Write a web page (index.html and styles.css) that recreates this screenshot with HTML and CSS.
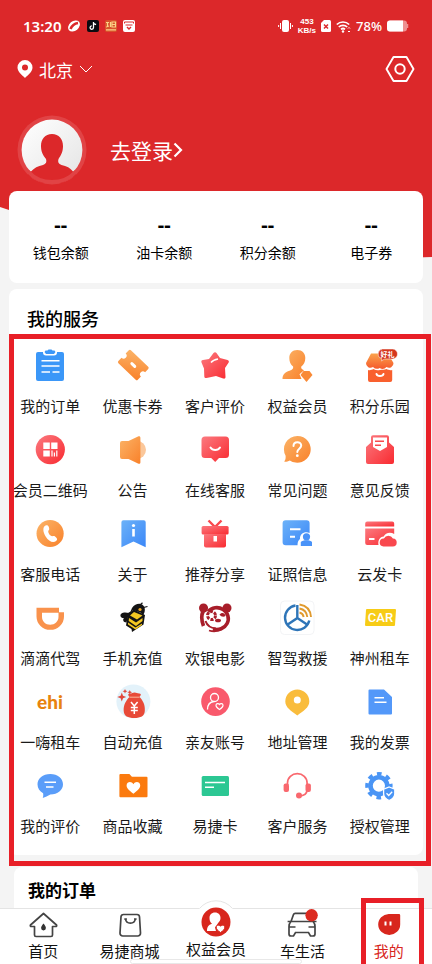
FILE: index.html
```html
<!DOCTYPE html>
<html lang="zh-CN">
<head>
  <meta charset="UTF-8">
  <meta name="viewport" content="width=device-width, initial-scale=1.0">
  <title>我的</title>
  <link rel="stylesheet" href="styles.css">
</head>
<body>
  <header class="hero">
    <div class="status-bar">
      <span class="time">13:20</span>
      <svg width="14" height="14" viewBox="0 0 14 14">
        <defs>
          <linearGradient id="red" x1="0" y1="0" x2="1" y2="1"><stop offset="0" stop-color="#fb7a80"/><stop offset="1" stop-color="#f92a30"/></linearGradient>
          <linearGradient id="orange" x1="0" y1="0" x2="1" y2="1"><stop offset="0" stop-color="#fbb468"/><stop offset="1" stop-color="#f9812a"/></linearGradient>
          <linearGradient id="blue" x1="0" y1="0" x2="1" y2="1"><stop offset="0" stop-color="#6cb2f8"/><stop offset="1" stop-color="#3b87f8"/></linearGradient>
          <linearGradient id="shop" x1="0" y1="0" x2="0" y2="1"><stop offset="0" stop-color="#fba34c"/><stop offset="1" stop-color="#f55a2c"/></linearGradient>
          <linearGradient id="face" x1="0" y1="0" x2="1" y2="1"><stop offset="0" stop-color="#ffffff"/><stop offset="1" stop-color="#e4e4e4"/></linearGradient>
        </defs>
        <ellipse cx="7" cy="7" rx="6.600" ry="4.800" transform="rotate(-40 7 7)" fill="#fff"/>
        <path d="M3.500 10C4.500 7.500 7.500 4.500 11 4" stroke="#dc282a" stroke-width="2.600" fill="none"/>
      </svg>
      <svg width="12" height="12" viewBox="0 0 12 12">
        <rect width="12" height="12" rx="2" fill="#0b0b10"/>
        <path d="M6.500 2v5.600a1.700 1.700 0 1 1-1.700-1.700M6.500 2c.2 1.600 1.200 2.400 2.600 2.500" stroke="#fff" stroke-width="1.300" fill="none"/>
      </svg>
      <svg width="12" height="12" viewBox="0 0 12 12">
        <rect width="12" height="12" rx="2" fill="#d9532c"/>
        <path d="M1 2.500h3M2.500 2v5M1 7l3-1M5.500 2v5M7 2h3.500v5H7zM7 4.500h3.500M1 9.800h10" stroke="#fbd487" stroke-width="1.200" fill="none"/>
      </svg>
      <svg width="12" height="12" viewBox="0 0 12 12">
        <rect width="12" height="12" rx="2" fill="#fff"/>
        <path d="M1.500 3.500V2h9v1.500M2.500 5h7" stroke="#dc282a" fill="none"/>
        <path d="M4 7l2 2 2-2" stroke="#dc282a" stroke-width="1.400" fill="none"/>
      </svg>
      <div class="status-right">
        <svg width="15" height="14" viewBox="0 0 15 14">
          <rect x="4" y="1" width="7" height="12" rx="2" fill="#fff"/>
          <path d="M2.500 4v6M12.500 4v6M.6 6v2M14.400 6v2" stroke="#fff"/>
        </svg>
        <span class="speed"><span>453</span><span>KB/s</span></span>
        <svg width="10" height="12" viewBox="0 0 10 12">
          <path d="M3 0h5.500A1.500 1.500 0 0 1 10 1.500v9A1.500 1.500 0 0 1 8.500 12h-7A1.500 1.500 0 0 1 0 10.500V3z" fill="#fff"/>
          <path d="M3 4.500l4 4M7 4.500l-4 4" stroke="#dc282a" stroke-width="1.500"/>
        </svg>
        <svg width="15" height="13" viewBox="0 0 15 13">
          <path d="M.8 4.500a9 9 0 0 1 12.400 0M2.800 7a6 6 0 0 1 8.400 0M5 9.400a3 3 0 0 1 4 0" stroke="#fff" stroke-width="1.700" fill="none"/>
          <circle cx="7" cy="11.500" r="1.200" fill="#fff"/>
          <path d="M12 8.500l1-1 1 1M12 11l1 1 1-1" stroke="#fff" fill="none"/>
        </svg>
        <span class="percent">78%</span>
        <svg width="22" height="12" viewBox="0 0 22 12">
          <rect width="20" height="11" y=".5" rx="3" fill="#ee8f90"/>
          <path d="M3 .5h13v11H3a3 3 0 0 1-3-3v-5a3 3 0 0 1 3-3z" fill="#fff"/>
          <path d="M20.500 4v4" stroke="#ee8f90" stroke-width="1.500"/>
        </svg>
      </div>
    </div>

    <div class="location-bar">
      <button class="city" type="button">
        <svg width="16" height="20" viewBox="0 0 16 20">
          <path fill-rule="evenodd" d="M8 1a7.500 7.500 0 0 1 7.500 7.500C15.500 13 11 16 8 19 5 16 .5 13 .5 8.500A7.500 7.500 0 0 1 8 1zm0 4.500a3 3 0 1 0 0 6 3 3 0 0 0 0-6z" fill="#fff"/>
        </svg>
        <span>北京</span>
        <svg width="14" height="8" viewBox="0 0 14 8"><path d="M1 1l6 6 6-6" stroke="#fff" fill="none"/></svg>
      </button>
      <button class="settings" type="button" aria-label="设置">
        <svg width="30" height="28" viewBox="0 0 30 28">
          <path d="M8.500 2h13L28.500 14l-7 12h-13L1.500 14z" stroke="#fff" stroke-width="1.900" fill="none" stroke-linejoin="round"/>
          <circle cx="15" cy="14" r="4.700" stroke="#fff" stroke-width="2" fill="none"/>
        </svg>
      </button>
    </div>

    <a class="profile" href="#">
      <svg width="70" height="70" viewBox="0 0 70 70">
        <circle cx="35" cy="35" r="34.500" fill="#e14345"/>
        <circle cx="35" cy="35" r="30.400" fill="url(#face)"/>
        <path d="M35 19c7 0 11 5 11 12 0 6-2 9-4.500 13-1 3 0 5 3 6 5 1 9 3 11.500 6.500L60 60 45 68H25L10 60l4-3.500C17 53 21 51 26 50c3-1 4-3 3-6-3-4-5-7-5-13 0-7 4-12 11-12z" fill="#dc282a"/>
        <path d="M11 56.500a32.500 32.500 0 0 0 48 0" stroke="#e14345" stroke-width="4" fill="none"/>
      </svg>
      <span class="login">去登录<svg width="10" height="16" viewBox="0 0 10 16"><path d="M1.500 1.500L8 8l-6.500 6.500" stroke="#fff" stroke-width="2.200" fill="none"/></svg></span>
    </a>
  </header>

  <main>
    <section class="card balances">
      <a href="#"><strong>--</strong>钱包余额</a>
      <a href="#"><strong>--</strong>油卡余额</a>
      <a href="#"><strong>--</strong>积分余额</a>
      <a href="#"><strong>--</strong>电子券</a>
    </section>

    <section class="card services">
      <h2>我的服务</h2>
      <div class="service-grid">
        <a href="#">
          <svg viewBox="0 0 36 36">
            <rect x="4" y="4" width="28" height="29" rx="2" fill="#3b97f8"/>
            <path d="M11 3.500h14v1a3 3 0 0 1-3 3h-8a3 3 0 0 1-3-3z" fill="#fff"/>
            <path d="M12.500 4l1-1.500h2l1-1h3l1 1h2l1 1.500-1.500 2h-8z" fill="#3b97f8"/>
            <path d="M9.500 12.700h18M9.500 18h18M9.500 24H18M20.500 24h7" stroke="#fff" stroke-width="1.500"/>
          </svg>
          我的订单
        </a>
        <a href="#">
          <svg viewBox="0 0 36 36">
            <g transform="translate(18.300 17) rotate(44)">
              <path d="M-12-9H12a1.500 1.500 0 0 1 1.500 1.500V-3a3 3 0 0 0 0 6v4.500A1.500 1.500 0 0 1 12 9h-24a1.500 1.500 0 0 1-1.500-1.500V3a3 3 0 0 0 0-6v-4.500A1.500 1.500 0 0 1-12-9z" fill="url(#orange)"/>
              <path d="M-2 0h4" stroke="#fff" stroke-width="3" stroke-linecap="round"/>
            </g>
          </svg>
          优惠卡券
        </a>
        <a href="#">
          <svg viewBox="0 0 36 36">
            <path d="M16.500 5c1-1.200 2.300-1 3 0l3.500 5 7.500 2c1.300.5 1.800 1.500 1 2.800L28 20l.5 9c0 1.300-1 2-2.300 1.500L19 28l-9.500 2c-1.300.3-2-.5-2.200-1.600L7 20.500 4.500 14.500c-.5-1.500 0-2.300 1.500-2.500l6-1z" fill="url(#red)"/>
            <path d="M14 14.500c1.500-2 4-3 7-3.500" stroke="#fff" stroke-width="1.500" fill="none"/>
          </svg>
          客户评价
        </a>
        <a href="#">
          <svg viewBox="0 0 36 36">
            <path d="M18.300 2c5 0 8 3.400 8 8 0 4-1.500 6.500-4 8.600-.5 2 .5 3 2.700 3.600l-4.500 4 2 4.800H3.500c0-4.500 2.500-6.800 7-8.200 3-.9 4-2 3.600-4.200-2.400-2-3.800-4.600-3.800-8.600 0-4.600 3-8 8-8z" fill="url(#orange)"/>
            <path d="M24.500 23h6l3 4-6 7-6-7z" fill="#f98a36"/>
          </svg>
          权益会员
        </a>
        <a href="#">
          <svg viewBox="0 0 36 36">
            <path d="M9 5.500h17l5.500 9.500a4.500 4.500 0 0 1-7 4 5.500 5.500 0 0 1-6.800 1 5.500 5.500 0 0 1-6.700-1 4.500 4.500 0 0 1-7-4z" fill="url(#shop)"/>
            <path d="M6 22c2 .5 4-.1 5.500-1 2 1.200 4 1.600 6.500 1s4.500.2 6.500-1c1.500.9 3.500 1.500 5.700 1v10a2 2 0 0 1-2 2H8a2 2 0 0 1-2-2z" fill="#f9602e"/>
            <path d="M14.500 26c.7 2.600 6.300 2.600 7 0" stroke="#fff" stroke-width="2" fill="none" stroke-linecap="round"/>
            <path d="M20.500 1h10a5 5 0 0 1 0 10h-8l-3 2 .5-2.200A5 5 0 0 1 20.500 1z" fill="#d5361d" stroke="#fff" stroke-width=".5"/>
            <text class="badge-text" x="25.500" y="8.500">好礼</text>
          </svg>
          积分乐园
        </a>

        <a href="#">
          <svg viewBox="0 0 36 36">
            <circle cx="18.300" cy="17.600" r="14.600" fill="url(#red)"/>
            <path d="M11.300 10.600h6.500v6.400h-6.500zM19.200 10.600h6.300v6.400h-6.300zM11.300 18.400h6.500v6.200h-6.500z" fill="#fff"/>
            <path d="M20 18.400v6.200M22.400 20.500v4.100M24.800 18.400v6.200" stroke="#fff" stroke-width="1.200"/>
          </svg>
          会员二维码
        </a>
        <a href="#">
          <svg viewBox="0 0 36 36">
            <circle cx="22" cy="17.800" r="9" fill="#fbc79a"/>
            <path d="M7 9h6.500l9.500-4.500c1.500-.6 2.400 0 2.400 1.300v24.500c0 1.300-1 1.900-2.400 1.300L13.500 27H7a2 2 0 0 1-2-2V11a2 2 0 0 1 2-2z" fill="url(#orange)"/>
          </svg>
          公告
        </a>
        <a href="#">
          <svg viewBox="0 0 36 36">
            <path d="M8 4.600h20.500a3.500 3.500 0 0 1 3.500 3.500v14.500a3.500 3.500 0 0 1-3.500 3.500H22L18.200 30l-4-3.900H8a3.500 3.500 0 0 1-3.500-3.500V8.100A3.500 3.500 0 0 1 8 4.600z" fill="url(#red)"/>
            <path d="M13.500 15.500c2 3.300 7.500 3.300 9.500 0" stroke="#fff" stroke-width="2" fill="none" stroke-linecap="round"/>
          </svg>
          在线客服
        </a>
        <a href="#">
          <svg viewBox="0 0 36 36">
            <path d="M18.300 3.900a13.400 13.400 0 1 1-7.500 24.500c-2 1.200-4 1.400-5.800 1.200 1.300-1 1.800-2.800 1.600-5.800A13.400 13.400 0 0 1 18.300 3.900z" fill="url(#orange)"/>
            <path d="M14.500 14c0-5 7.700-5 7.700-.4 0 3-3.900 3.200-3.900 6.400" stroke="#fff" stroke-width="2" fill="none" stroke-linecap="round"/>
            <circle cx="18.300" cy="23.700" r="1.400" fill="#fff"/>
          </svg>
          常见问题
        </a>
        <a href="#">
          <svg viewBox="0 0 36 36">
            <path d="M4 15l5-4.500V5.300a2 2 0 0 1 2-2h14a2 2 0 0 1 2 2v5.200l5 4.500v15a2 2 0 0 1-2 2H6a2 2 0 0 1-2-2z" fill="url(#red)"/>
            <path d="M11 5.500h14V15l-7 4-7-4z" fill="#fff"/>
            <path d="M13 9.300h9M13 13.300h6" stroke="#f9494f" stroke-width="1.500"/>
          </svg>
          意见反馈
        </a>

        <a href="#">
          <svg viewBox="0 0 36 36">
            <circle cx="18.100" cy="17.500" r="13.600" fill="url(#orange)"/>
            <path d="M13.500 9.500c1.500-.8 2.700-.2 3.300 1.500.6 1.800.8 2.700-.5 3.700-.4 2.300 1.700 5 4 5.600 1.500-.8 2.500-.2 3.600 1 1.500 1.400 1.700 2.400.2 3.600-3 2.500-7.500.4-10.300-4.200-2.800-4.500-3.500-9.500-.3-11.200z" fill="#fff"/>
          </svg>
          客服电话
        </a>
        <a href="#">
          <svg viewBox="0 0 36 36">
            <path d="M8.400 4.200h20.300a2 2 0 0 1 2 2V31.200L18.500 25.500 6.400 31.200v-25a2 2 0 0 1 2-2z" fill="url(#blue)"/>
            <circle cx="18.500" cy="9.500" r="1.600" fill="#fff"/>
            <path d="M18.500 13v7.500" stroke="#fff" stroke-width="2.600"/>
          </svg>
          关于
        </a>
        <a href="#">
          <svg viewBox="0 0 36 36">
            <path d="M11.500 4.500L18 11l6.500-6.500" stroke="#f9484e" stroke-width="2.400" fill="none"/>
            <rect x="4.600" y="9.900" width="27" height="8.500" rx="1.500" fill="url(#red)"/>
            <path d="M7 18h22v11.500a2 2 0 0 1-2 2H9a2 2 0 0 1-2-2z" fill="url(#red)"/>
            <path d="M16.500 20h3.500v5.500h-3.500z" fill="#fff"/>
          </svg>
          推荐分享
        </a>
        <a href="#">
          <svg viewBox="0 0 36 36">
            <path d="M6.600 4.200h21a3 3 0 0 1 3 3V17c-5-2-10 1-9.600 6-1.500 1-2.500 3-2.500 6.200H6.600a3 3 0 0 1-3-3v-19a3 3 0 0 1 3-3z" fill="url(#blue)"/>
            <path d="M11 13.200h10.500M11 20.800h5" stroke="#fff" stroke-width="2"/>
            <circle cx="27.500" cy="20.800" r="3.600" fill="#4a93f8"/>
            <path d="M21.800 30v-4c1-1.200 3-1.700 5.700-1.700s4.500.5 5.500 1.700v4z" fill="#4a93f8"/>
          </svg>
          证照信息
        </a>
        <a href="#">
          <svg viewBox="0 0 36 36">
            <path d="M5.200 5.500h25a2 2 0 0 1 2 2v3h-29v-3a2 2 0 0 1 2-2z" fill="url(#red)"/>
            <path d="M3.200 12.500h29v5.500c-4-2.500-9-1-10.500 2.500-4 .3-6 4-5.200 8.500H5.200a2 2 0 0 1-2-2z" fill="url(#red)"/>
            <path d="M7 23h5.500" stroke="#fff" stroke-width="2"/>
            <path d="M21.500 30.500a4 4 0 0 1 .4-8 5 5 0 0 1 9 0 4 4 0 0 1-.4 8z" fill="#f9484e"/>
          </svg>
          云发卡
        </a>

        <a href="#">
          <svg viewBox="0 0 36 36">
            <path fill-rule="evenodd" d="M4.500 7.800H27v4.500h5v4.200a13.700 13.300 0 0 1-27.500 0zM10 12.800v4c0 4.600 3.500 8 8.200 8s8.300-3.400 8.300-8v-4z" fill="#f9924c"/>
          </svg>
          滴滴代驾
        </a>
        <a href="#">
          <svg viewBox="0 0 36 36">
            <path d="M17 8c3-4.500 8-5 10.500-3.200 3 2.200 3 6.700.8 10.200l-3-2.500-7-2.500-3 2z" fill="#141414"/>
            <path d="M24.500 5.500l3-2.700M28.500 7.500l4-1" stroke="#141414" stroke-width="1.200"/>
            <path d="M14 13C9 11.500 5 13 5.500 16c.3 1.600 2 2.200 3.500 2-1.500 1.500-1 4.500 2.500 4.500z" fill="#141414"/>
            <path d="M19 9.500l11 5.500-1.500 9.500-11.500 7.500-.5-3-5.500-3.500L13 13z" fill="#141414"/>
            <path d="M19 12l8.500 3.500-5.500 4-7-4zM14 18l7 4.500 6.500-4.500v3L21 26l-7.300-5zM13 22.500l7.500 5 6.500-4V25l-6.500 4.500-7.500-5z" fill="#f3c822"/>
            <circle cx="25" cy="9.500" r="1.600" fill="#f3a922"/>
          </svg>
          手机充值
        </a>
        <a href="#">
          <svg viewBox="0 0 36 36">
            <circle cx="6.500" cy="8" r="4.500" fill="#a81e2a"/>
            <circle cx="30" cy="8" r="4.500" fill="#a81e2a"/>
            <path d="M10 6.500C4.500 11 3.500 18 6.500 26" stroke="#a81e2a" stroke-width="3.600" fill="none"/>
            <path d="M11 11.500a11.500 11 0 1 1 5 17.500" stroke="#a81e2a" stroke-width="3.600" fill="none"/>
            <path d="M8.500 21c1.500 4.500 5 7 10.500 7.500" stroke="#a81e2a" stroke-width="2" fill="none"/>
            <path d="M12 30.500c4 1.200 9 1 13-1.500" stroke="#a81e2a" stroke-width="1.800" fill="none"/>
            <circle cx="14.500" cy="15.500" r="4" stroke="#a81e2a" stroke-width="3" stroke-dasharray="3 1.200" fill="none"/>
            <path d="M22.500 14.500c2-2.500 5.500-2 6 1.500-2 1.200-4.500.8-6-1.500z" fill="#a81e2a"/>
            <ellipse cx="21" cy="20.500" rx="3" ry="1.800" fill="#a81e2a"/>
          </svg>
          欢银电影
        </a>
        <a href="#">
          <svg viewBox="0 0 36 36">
            <rect x="1.500" y="1" width="33.500" height="33.500" rx="4" fill="#fff" stroke="#f3f4f6"/>
            <path d="M16.500 5.500a12.300 12.300 0 1 0 13.800 15" stroke="#2e75b8" stroke-width="2.400" fill="none"/>
            <path d="M18.300 5v13L8 25M18.300 18l10.500 7" stroke="#2e75b8" stroke-width="2.400" fill="none"/>
            <path d="M20.500 4.500c6.500 1 11 5.500 11.500 12.500M20.500 8.500c4.500.8 7.300 3.800 7.800 8.500M20.500 12.500c2.200.5 3.700 2 4.200 4.500" stroke="#e09a2e" stroke-width="1.900" fill="none"/>
          </svg>
          智驾救援
        </a>
        <a href="#">
          <svg viewBox="0 0 36 36">
            <path d="M5 9h28a1 1 0 0 1 1 1l-1 15a1 1 0 0 1-1 1H4a1 1 0 0 1-1-1L4 10a1 1 0 0 1 1-1z" fill="#f7cc16"/>
            <text class="car-logo" x="18.500" y="22">CAR</text>
          </svg>
          神州租车
        </a>

        <a href="#">
          <svg viewBox="0 0 36 36">
            <text class="ehi-logo" x="18" y="25">ehi</text>
          </svg>
          一嗨租车
        </a>
        <a href="#">
          <svg viewBox="0 0 36 36">
            <circle cx="18.400" cy="17.400" r="17" fill="#e3f2fa"/>
            <path d="M14.500 13c-1.500-2-2-3 0-3.500 2 .3 3-1 5-1s3 1.200 5 1c2 .5 1.500 1.500 0 3.500 3.500 3.500 5.800 8 5.300 14-.3 5-4 7-10.500 7S9 32 8.700 27c-.4-6 2.300-10.500 5.800-14z" fill="#e84a38"/>
            <path d="M14.500 13.200h10" stroke="#fbb49a"/>
            <path d="M16 18l3.300 4 3.300-4M19.300 22v8M15.800 23.500h7M15.800 26.500h7" stroke="#fff" stroke-width="1.500" fill="none"/>
            <path d="M6.800 8.500l1.200 3.200 3.300 1.200L8 14.200l-1.200 3.200-1.200-3.200-3.300-1.300 3.300-1.200zM10 5l.7 1.600 1.700.6-1.700.7L10 9.500l-.7-1.600-1.700-.7 1.700-.6zM14.800 6l.6 1.600 1.700.6-1.700.7-.6 1.600-.7-1.600-1.700-.7 1.700-.6z" fill="#e0483c"/>
          </svg>
          自动充值
        </a>
        <a href="#">
          <svg viewBox="0 0 36 36">
            <circle cx="18.500" cy="17.600" r="14.300" fill="#f9596c"/>
            <circle cx="17.500" cy="13.500" r="4" stroke="#fff" stroke-width="1.300" fill="none"/>
            <path d="M10.500 25.500c0-4.500 2.500-7.500 6.500-8" stroke="#fff" stroke-width="1.300" fill="none"/>
            <path d="M22.500 25.500c-2.500-1.700-3.700-3-3.500-4.500.3-1.700 2.500-2 3.500-.5 1-1.500 3.200-1.200 3.500.5.2 1.500-1 2.800-3.500 4.500z" stroke="#fff" stroke-width="1.200" fill="none"/>
          </svg>
          亲友账号
        </a>
        <a href="#">
          <svg viewBox="0 0 36 36">
            <path d="M18.300 5.400a12 12 0 0 1 12 12c0 6-6 9.500-12 14-6-4.500-12-8-12-14a12 12 0 0 1 12-12z" fill="#f9bc3c"/>
            <circle cx="18.300" cy="16" r="3.500" fill="#fff"/>
          </svg>
          地址管理
        </a>
        <a href="#">
          <svg viewBox="0 0 36 36">
            <path d="M7.500 5.400H22l8 7.500v16.500a1 1 0 0 1-1 1H7.500a1 1 0 0 1-1-1v-23a1 1 0 0 1 1-1z" fill="#5398f9"/>
            <path d="M12.500 13.800H22M12.500 18.300h12" stroke="#fff" stroke-width="1.400"/>
          </svg>
          我的发票
        </a>

        <a href="#">
          <svg viewBox="0 0 36 36">
            <path d="M18.300 6c7.500 0 12.700 4.400 12.700 10.300s-5.200 10.300-12.700 10.300c-2.500 1.600-5 2.800-7.600 3.400.6-1.500.7-3 .4-4.800-3.500-1.800-5.600-5-5.600-8.900C5.500 10.400 10.800 6 18.300 6z" fill="#5a9df9"/>
            <path d="M12.500 14.200h11.500M14 19h7.500" stroke="#fff" stroke-width="1.500"/>
          </svg>
          我的评价
        </a>
        <a href="#">
          <svg viewBox="0 0 36 36">
            <path d="M5.400 6h9l2.500 2.700h14.600a1 1 0 0 1 1 1v18.600a1 1 0 0 1-1 1H5.400a1 1 0 0 1-1-1V7a1 1 0 0 1 1-1z" fill="#fb7a0e"/>
            <path d="M18.400 25.700c-4.500-3.500-7-5.700-6.800-8.500.3-3.600 5-4.200 6.800-1 1.800-3.200 6.500-2.600 6.800 1 .2 2.800-2.300 5-6.800 8.500z" fill="#fff"/>
          </svg>
          商品收藏
        </a>
        <a href="#">
          <svg viewBox="0 0 36 36">
            <rect x="4.700" y="8" width="27.300" height="20" rx="1.500" fill="#2cc793"/>
            <path d="M8 14.500h20M8 19.300h9" stroke="#fff" stroke-width="1.500"/>
          </svg>
          易捷卡
        </a>
        <a href="#">
          <svg viewBox="0 0 36 36">
            <path d="M8.500 17v-2a9.800 9.300 0 0 1 19.600 0v2M28 22c0 4-3 5.800-8 5.800" stroke="#f9686e" stroke-width="1.700" fill="none"/>
            <rect x="4.600" y="15.500" width="5.400" height="8.500" rx="2" fill="#f9686e"/>
            <rect x="26.500" y="15.500" width="5.400" height="8.500" rx="2" fill="#f9686e"/>
            <circle cx="20" cy="27.600" r="3" fill="#f9686e"/>
          </svg>
          客户服务
        </a>
        <a href="#">
          <svg viewBox="0 0 36 36">
            <circle cx="16.900" cy="17.700" r="8.400" stroke="#4a95f5" stroke-width="4.600" fill="none"/>
            <circle cx="16.900" cy="17.700" r="11.900" stroke="#4a95f5" stroke-width="3.600" stroke-dasharray="4.670 4.670" stroke-dashoffset="2.300" fill="none"/>
            <path d="M27.200 19l5.600 2.200v4.500c0 3.300-2.400 5.400-5.600 6.800-3.200-1.400-5.600-3.500-5.600-6.800v-4.500z" fill="#4a95f5" stroke="#fff" stroke-width="1.300"/>
            <path d="M24.500 25.300l2.200 2.200 3.500-3.700" stroke="#fff" stroke-width="1.300" fill="none"/>
          </svg>
          授权管理
        </a>
      </div>
      <div class="highlight"></div>
    </section>

    <section class="orders">
      <h2>我的订单</h2>
    </section>
  </main>

  <nav class="tab-bar">
    <a href="#">
      <svg viewBox="0 0 32 32">
        <path d="M16.500 4.500L3.500 16c-.5 1 0 1.500 1 1.500h3v8.500a1.500 1.500 0 0 0 1.500 1.500h15a1.500 1.500 0 0 0 1.500-1.500v-8.500h3c1 0 1.500-.5 1-1.500z" stroke="#444" stroke-width="1.700" fill="none" stroke-linejoin="round"/>
        <path d="M16.500 14.500c1.500 2 2.400 3.200 2.400 4.500a2.400 2.400 0 0 1-4.800 0c0-1.300.9-2.500 2.400-4.500z" fill="#333"/>
      </svg>
      首页
    </a>
    <a href="#">
      <svg viewBox="0 0 32 32">
        <path d="M9.500 5.500h13.500a2.500 2.500 0 0 1 2.500 2.300l1 16.200a2.800 2.800 0 0 1-2.800 3H8.800A2.800 2.800 0 0 1 6 24L7 7.800a2.500 2.500 0 0 1 2.500-2.300z" stroke="#444" stroke-width="1.700" fill="none"/>
        <path d="M11.500 10c.8 5.500 9 5.500 9.800 0" stroke="#444" stroke-width="1.700" fill="none"/>
        <path d="M10.300 10h2.600M20 10h2.600" stroke="#444" stroke-width="1.500"/>
      </svg>
      易捷商城
    </a>
    <a class="member" href="#">
      <svg viewBox="0 0 44 44">
        <circle cx="22" cy="22" r="21.500" fill="#fff"/>
        <path d="M5.500 8.500A21.500 21.500 0 0 1 38.500 8.500" stroke="#e4e4e4" fill="none"/>
        <circle cx="22" cy="22" r="14.500" fill="#d8261d"/>
        <path d="M21 12.500c3.500 0 5.500 2.400 5.500 5.500 0 2-1 3.700-2.200 4.800l-3.300 4.700 1 3.500h-9c0-4 1.500-6 5-7.200-1.500-1.200-2.500-3-2.500-5.800 0-3.100 2-5.500 5.500-5.500z" fill="#fff"/>
        <path d="M26.500 32.500c-3-2-4.500-3.700-4.300-5.500.3-2 3-2.500 4.300-.7 1.300-1.800 4-1.300 4.300.7.200 1.800-1.300 3.500-4.300 5.500z" fill="#fff" stroke="#d8261d"/>
      </svg>
      权益会员
    </a>
    <a href="#">
      <svg viewBox="0 0 32 32">
        <path d="M5 12.500l2.500-7a1.800 1.800 0 0 1 1.700-1.200h13.500a1.800 1.800 0 0 1 1.700 1.200l2.500 7M5 12.500h22M5 12.500c-1.500 1.500-2 3-2 5V25a2 2 0 0 0 2 2h2.500l2-3.500h13l2 3.500H27a2 2 0 0 0 2-2v-7.500c0-2-.5-3.500-2-5M1.600 12.500H5M27 12.500h3.500M3.500 18h6M22.500 18h6" stroke="#444" stroke-width="1.700" fill="none"/>
        <circle cx="25.600" cy="6.300" r="6.200" fill="#dc2a20"/>
      </svg>
      车生活
    </a>
    <a class="active" href="#">
      <svg viewBox="0 0 32 32">
        <path d="M15.700 5H26a1.200 1.200 0 0 1 1.200 1.200v9.300A11 10.500 0 1 1 15.700 5z" fill="#d8261d"/>
        <path d="M12.500 12.500v4M17.500 12.500v4" stroke="#fff" stroke-width="2"/>
      </svg>
      我的
    </a>
    <span class="home-indicator"></span>
  </nav>
</body>
</html>
```
FILE: styles.css
```css
* {
  box-sizing: border-box;
}

body {
  font-family: "Noto Sans", "Noto Sans CJK SC", sans-serif;
  background-color: #f4f4f4;
  color: #1a1a1a;
  margin: 0;
  padding-bottom: 56px;
}

a {
  color: inherit;
  text-decoration: none;
}

button {
  border: none;
  padding: 0;
  background: none;
  color: inherit;
  font: inherit;
  cursor: pointer;
}

svg {
  display: block;
  flex-shrink: 0;
}

h2 {
  margin: 0;
  font-weight: 500;
  color: #000;
}

/* Red header, its lower edge slopes down behind the balance card */
.hero {
  background-color: #dc282a;
  color: #fff;
  padding: 14px 17px 79px;
  clip-path: polygon(0 0, 100% 0, 100% 257px, 50% 264px, 30% 250px, 0 207px);
}

.status-bar {
  display: flex;
  align-items: center;
  gap: 6px;
  height: 24px;
  padding: 0 6px;
}

.time {
  font-size: 15px;
  font-weight: 600;
}

.status-right {
  display: flex;
  align-items: center;
  gap: 5px;
  margin-left: auto;
}

.speed {
  display: flex;
  flex-direction: column;
  font-family: "Liberation Sans", sans-serif;
  font-size: 8px;
  font-weight: 700;
  line-height: 9px;
  text-align: center;
}

.percent {
  font-size: 13px;
  font-weight: 500;
}

.location-bar {
  display: flex;
  justify-content: space-between;
  align-items: center;
  height: 28px;
  margin-top: 17px;
}

.city {
  display: flex;
  align-items: center;
  gap: 6px;
  font-size: 17px;
}

.profile {
  display: flex;
  align-items: center;
  gap: 23px;
  margin-top: 32px;
}

.login {
  display: flex;
  align-items: center;
  font-size: 21px;
}

.card {
  position: relative;
  margin: 0 9px 6px;
  background: #fff;
  border-radius: 8px;
}

.balances {
  display: grid;
  grid-template-columns: repeat(4, 1fr);
  margin-top: -73px;
  padding: 22px 0 20px;
  color: #000;
  font-size: 14px;
  line-height: 20px;
  text-align: center;
}

.balances strong {
  display: block;
  font-size: 20px;
  line-height: 24px;
  margin-bottom: 6px;
}

.services {
  padding: 18px 0 3px;
}

.services h2 {
  padding-left: 18px;
  font-size: 18px;
  line-height: 24px;
}

.service-grid {
  display: grid;
  grid-template-columns: repeat(5, 1fr);
  grid-auto-rows: 84px;
  margin: 17px 2px 0 0;
}

.service-grid a {
  display: flex;
  flex-direction: column;
  align-items: center;
  gap: 12px;
  font-size: 15px;
  line-height: 20px;
  white-space: nowrap;
}

.service-grid svg {
  width: 36px;
  height: 36px;
}

.badge-text {
  font-size: 7px;
  font-weight: 700;
  fill: #fff;
  text-anchor: middle;
}

.car-logo {
  font: 500 13px Roboto, sans-serif;
  fill: #fff;
  text-anchor: middle;
}

.ehi-logo {
  font: 900 19px Lato, sans-serif;
  fill: #e8830f;
  text-anchor: middle;
}

/* Marker frame round the service grid */
.highlight {
  position: absolute;
  top: 45px;
  right: -8px;
  bottom: -11px;
  left: 0;
  border: 5px solid #e81f27;
  pointer-events: none;
}

.orders {
  margin: 12px 14px 0;
  padding: 12px 14px 16px;
  background: #fff;
  border-radius: 8px;
}

.orders h2 {
  font-size: 17px;
  font-weight: 700;
  line-height: 24px;
}

.tab-bar {
  position: fixed;
  right: 0;
  bottom: 0;
  left: 0;
  display: grid;
  grid-template-columns: repeat(5, 1fr);
  height: 56px;
  background: #fff;
  border-top: 1px solid #e4e4e4;
}

.tab-bar a {
  position: relative;
  display: flex;
  flex-direction: column;
  align-items: center;
  color: #111;
  font-size: 15px;
  line-height: 20px;
  white-space: nowrap;
}

.tab-bar svg {
  width: 32px;
  height: 32px;
}

.tab-bar .member svg {
  width: 44px;
  height: 44px;
  margin-top: -9px;
  margin-bottom: -5px;
}

.tab-bar .active {
  color: #d8261d;
}

.active::after {
  content: "";
  position: absolute;
  top: -11px;
  right: 8px;
  bottom: 0;
  left: 15px;
  border: 5px solid #e81f27;
  border-bottom: none;
}

.home-indicator {
  position: absolute;
  bottom: 0;
  left: 30%;
  width: 40%;
  height: 5px;
  background: #fff;
  border: 1px solid #e8e8e8;
  border-radius: 3px;
}
```
